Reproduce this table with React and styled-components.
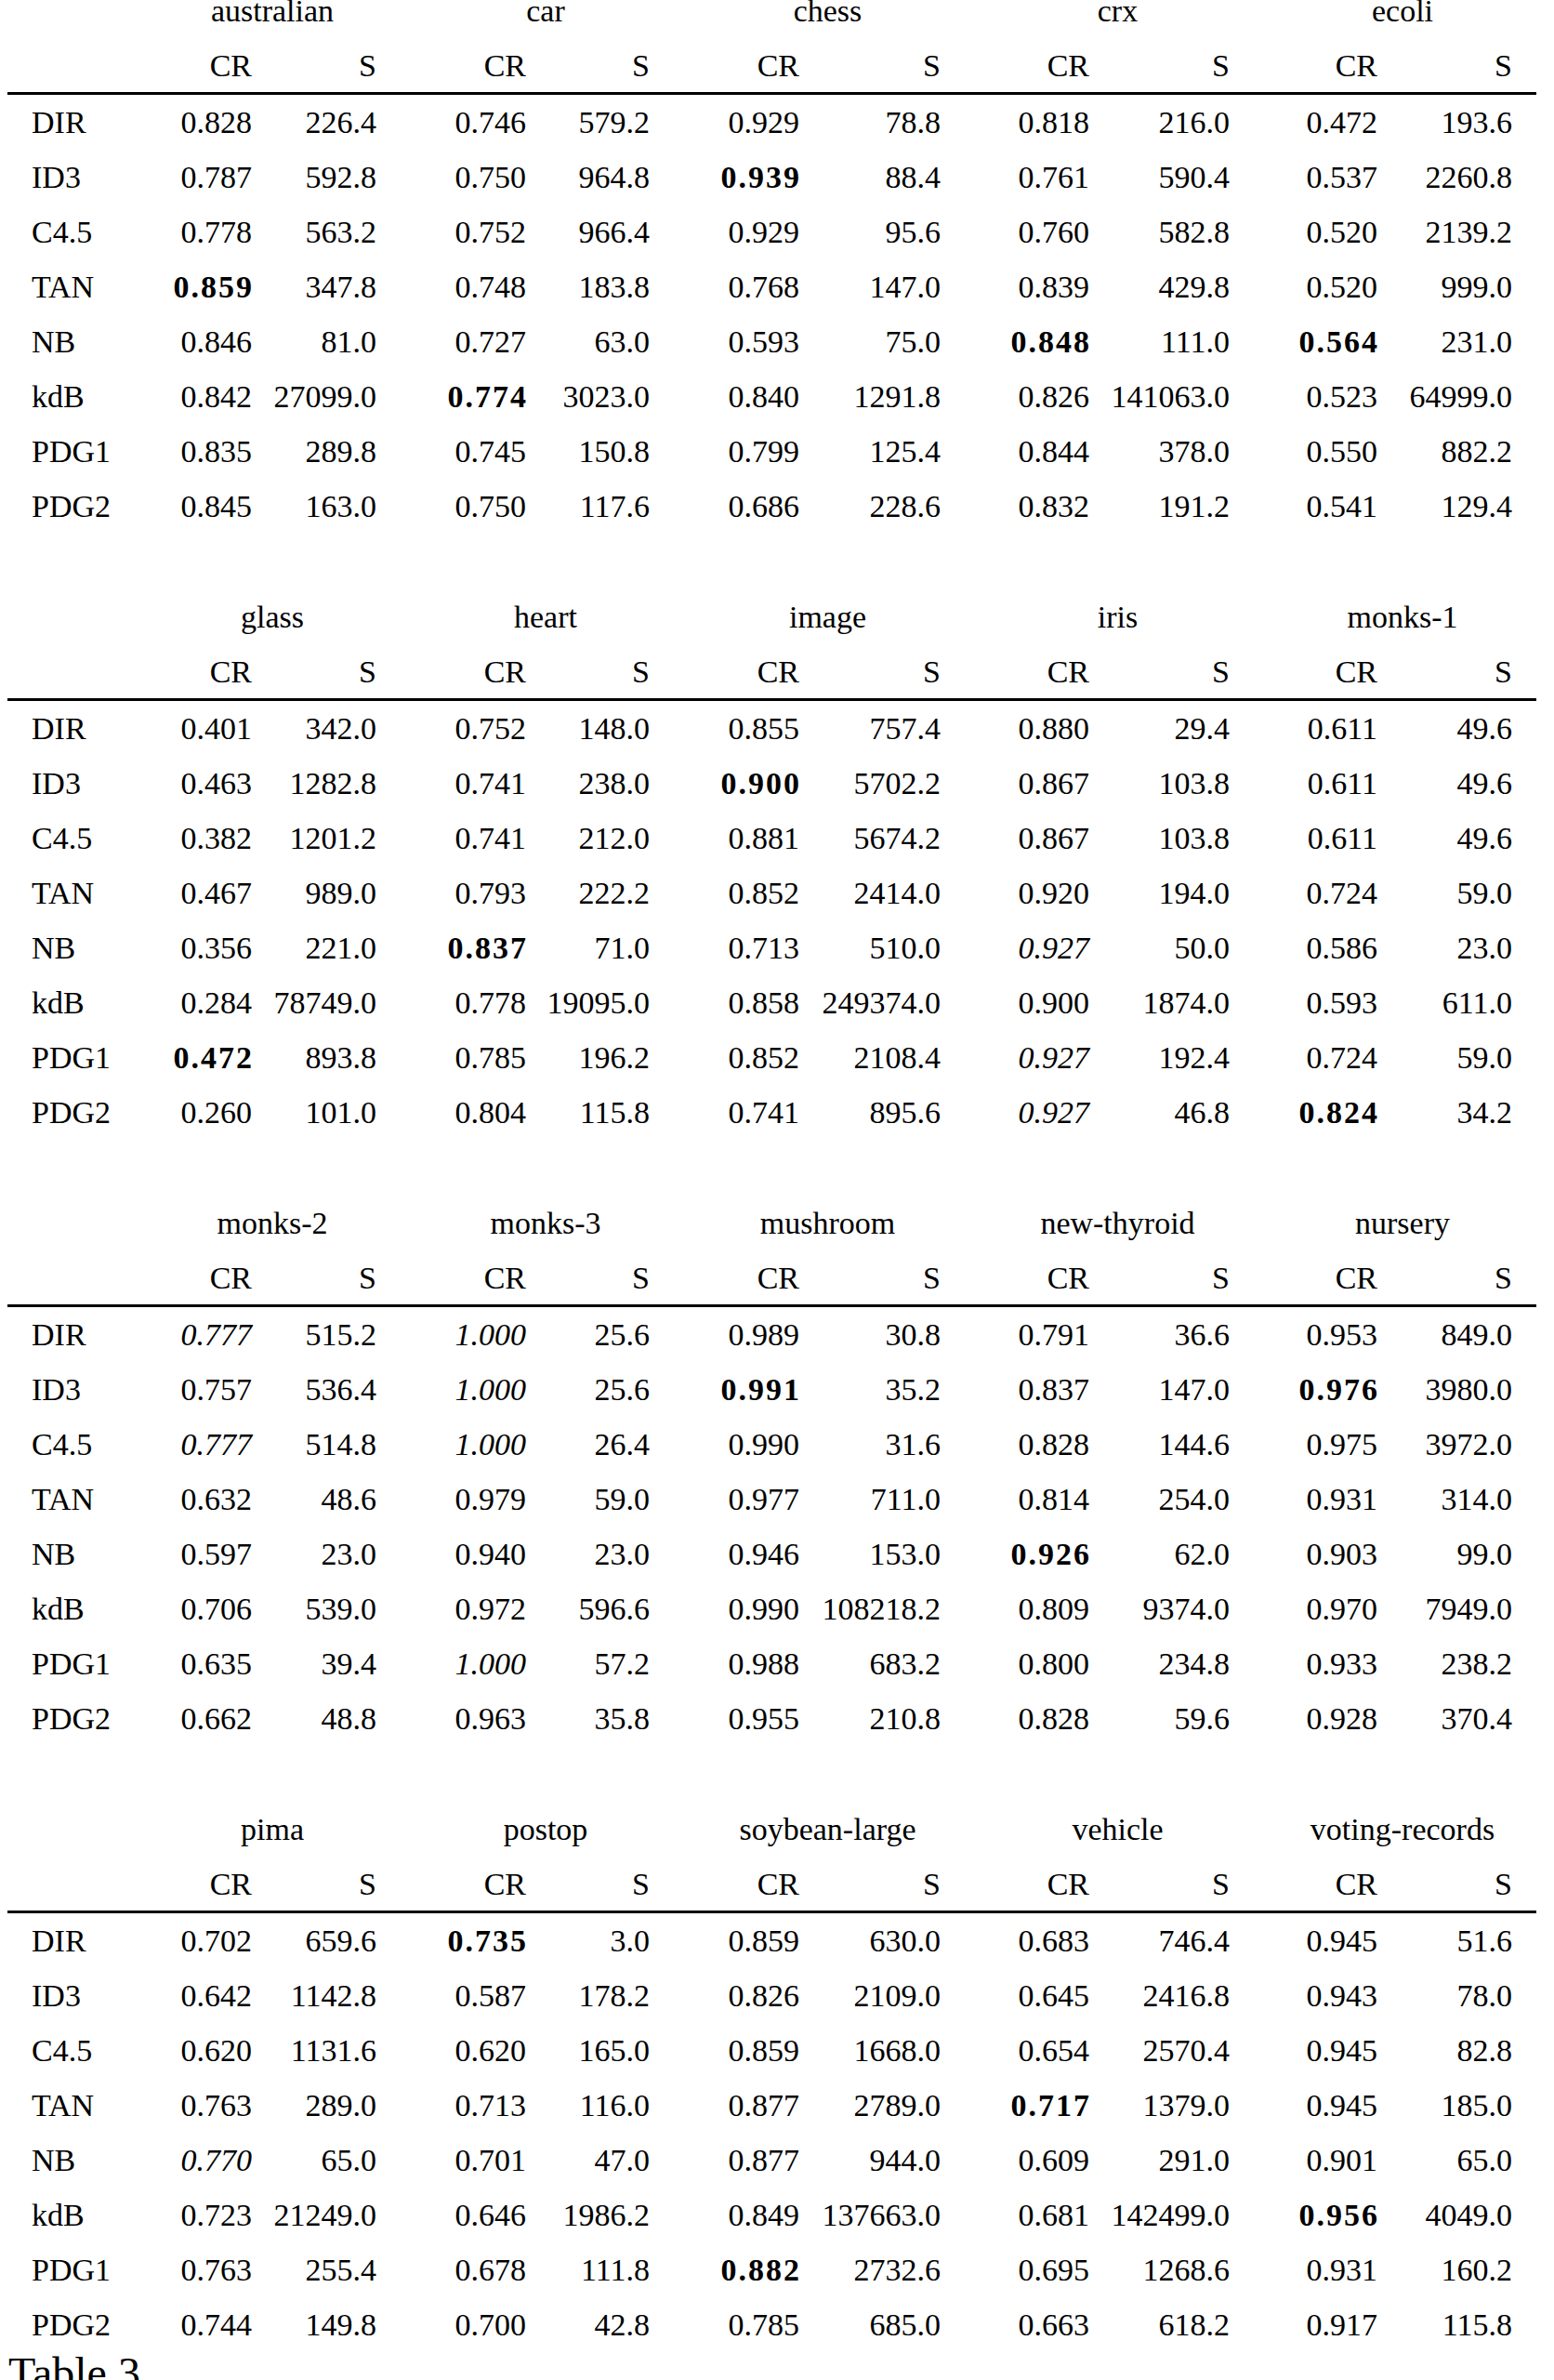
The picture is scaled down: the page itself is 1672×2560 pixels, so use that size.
import styled, { createGlobalStyle } from "styled-components";

const GlobalStyle = createGlobalStyle`
  html, body {
    margin: 0;
    padding: 0;
    background: #ffffff;
  }
  body {
    font-family: "Liberation Serif", "Times New Roman", serif;
    color: #000000;
  }
`;

// column tracks shared by every block (label, then CR/S pairs)
const COLS = "138px 160px 134px 161px 133px 161px 152px 160px 151px 159px 136px";

const Page = styled.div`
  width: 1672px;
  padding-top: 0;
`;

const Block = styled.div`
  display: grid;
  grid-template-columns: ${COLS};
  margin-left: 8px;
  font-size: 34px;

  & + & {
    margin-top: 78px;
  }
`;

const Corner = styled.div`
  line-height: 23px;
  height: 23px;
`;

const DatasetName = styled.div`
  grid-column: span 2;
  text-align: center;
  line-height: 23px;
  height: 23px;
  white-space: nowrap;
  padding-left: ${(p) => (p.$last ? "7px" : "0")};
`;

const HeadLabel = styled.div`
  margin-top: 19px;
  line-height: 57px;
`;

const HeadCell = styled.div`
  margin-top: 19px;
  line-height: 57px;
  display: flex;
  justify-content: flex-end;
  padding-right: ${(p) => (p.$last ? "26px" : "35px")};
`;

const Rule = styled.div`
  grid-column: 1 / -1;
  height: 3px;
  background: #000000;
`;

const RowLabel = styled.div`
  line-height: 59px;
  padding-left: 26px;
  white-space: nowrap;
`;

const Cell = styled.div`
  line-height: 59px;
  display: flex;
  justify-content: flex-end;
  white-space: nowrap;
  padding-right: ${(p) => (p.$last ? "26px" : "35px")};
`;

const Value = styled.span`
  font-weight: ${(p) => (p.$bold ? 700 : 400)};
  font-style: ${(p) => (p.$italic ? "italic" : "normal")};
  letter-spacing: ${(p) => (p.$bold ? "2px" : "0")};
  margin-right: ${(p) => (p.$bold ? "-2px" : "0")};
`;

const Caption = styled.div`
  font-size: 48px;
  line-height: 48px;
  padding-left: 9px;
  margin-top: -1px;
`;

const METHODS = ["DIR", "ID3", "C4.5", "TAN", "NB", "kdB", "PDG1", "PDG2"];

// "b:" = best value (bold), "i:" = italic
const blocks = [
  {
    names: ["australian", "car", "chess", "crx", "ecoli"],
    rows: [
      ["0.828", "226.4", "0.746", "579.2", "0.929", "78.8", "0.818", "216.0", "0.472", "193.6"],
      ["0.787", "592.8", "0.750", "964.8", "b:0.939", "88.4", "0.761", "590.4", "0.537", "2260.8"],
      ["0.778", "563.2", "0.752", "966.4", "0.929", "95.6", "0.760", "582.8", "0.520", "2139.2"],
      ["b:0.859", "347.8", "0.748", "183.8", "0.768", "147.0", "0.839", "429.8", "0.520", "999.0"],
      ["0.846", "81.0", "0.727", "63.0", "0.593", "75.0", "b:0.848", "111.0", "b:0.564", "231.0"],
      ["0.842", "27099.0", "b:0.774", "3023.0", "0.840", "1291.8", "0.826", "141063.0", "0.523", "64999.0"],
      ["0.835", "289.8", "0.745", "150.8", "0.799", "125.4", "0.844", "378.0", "0.550", "882.2"],
      ["0.845", "163.0", "0.750", "117.6", "0.686", "228.6", "0.832", "191.2", "0.541", "129.4"],
    ],
  },
  {
    names: ["glass", "heart", "image", "iris", "monks-1"],
    rows: [
      ["0.401", "342.0", "0.752", "148.0", "0.855", "757.4", "0.880", "29.4", "0.611", "49.6"],
      ["0.463", "1282.8", "0.741", "238.0", "b:0.900", "5702.2", "0.867", "103.8", "0.611", "49.6"],
      ["0.382", "1201.2", "0.741", "212.0", "0.881", "5674.2", "0.867", "103.8", "0.611", "49.6"],
      ["0.467", "989.0", "0.793", "222.2", "0.852", "2414.0", "0.920", "194.0", "0.724", "59.0"],
      ["0.356", "221.0", "b:0.837", "71.0", "0.713", "510.0", "i:0.927", "50.0", "0.586", "23.0"],
      ["0.284", "78749.0", "0.778", "19095.0", "0.858", "249374.0", "0.900", "1874.0", "0.593", "611.0"],
      ["b:0.472", "893.8", "0.785", "196.2", "0.852", "2108.4", "i:0.927", "192.4", "0.724", "59.0"],
      ["0.260", "101.0", "0.804", "115.8", "0.741", "895.6", "i:0.927", "46.8", "b:0.824", "34.2"],
    ],
  },
  {
    names: ["monks-2", "monks-3", "mushroom", "new-thyroid", "nursery"],
    rows: [
      ["i:0.777", "515.2", "i:1.000", "25.6", "0.989", "30.8", "0.791", "36.6", "0.953", "849.0"],
      ["0.757", "536.4", "i:1.000", "25.6", "b:0.991", "35.2", "0.837", "147.0", "b:0.976", "3980.0"],
      ["i:0.777", "514.8", "i:1.000", "26.4", "0.990", "31.6", "0.828", "144.6", "0.975", "3972.0"],
      ["0.632", "48.6", "0.979", "59.0", "0.977", "711.0", "0.814", "254.0", "0.931", "314.0"],
      ["0.597", "23.0", "0.940", "23.0", "0.946", "153.0", "b:0.926", "62.0", "0.903", "99.0"],
      ["0.706", "539.0", "0.972", "596.6", "0.990", "108218.2", "0.809", "9374.0", "0.970", "7949.0"],
      ["0.635", "39.4", "i:1.000", "57.2", "0.988", "683.2", "0.800", "234.8", "0.933", "238.2"],
      ["0.662", "48.8", "0.963", "35.8", "0.955", "210.8", "0.828", "59.6", "0.928", "370.4"],
    ],
  },
  {
    names: ["pima", "postop", "soybean-large", "vehicle", "voting-records"],
    rows: [
      ["0.702", "659.6", "b:0.735", "3.0", "0.859", "630.0", "0.683", "746.4", "0.945", "51.6"],
      ["0.642", "1142.8", "0.587", "178.2", "0.826", "2109.0", "0.645", "2416.8", "0.943", "78.0"],
      ["0.620", "1131.6", "0.620", "165.0", "0.859", "1668.0", "0.654", "2570.4", "0.945", "82.8"],
      ["0.763", "289.0", "0.713", "116.0", "0.877", "2789.0", "b:0.717", "1379.0", "0.945", "185.0"],
      ["i:0.770", "65.0", "0.701", "47.0", "0.877", "944.0", "0.609", "291.0", "0.901", "65.0"],
      ["0.723", "21249.0", "0.646", "1986.2", "0.849", "137663.0", "0.681", "142499.0", "b:0.956", "4049.0"],
      ["0.763", "255.4", "0.678", "111.8", "b:0.882", "2732.6", "0.695", "1268.6", "0.931", "160.2"],
      ["0.744", "149.8", "0.700", "42.8", "0.785", "685.0", "0.663", "618.2", "0.917", "115.8"],
    ],
  },
];

const renderValue = (raw) => {
  const bold = raw.startsWith("b:");
  const italic = raw.startsWith("i:");
  const text = bold || italic ? raw.slice(2) : raw;
  return (
    <Value $bold={bold} $italic={italic}>
      {text}
    </Value>
  );
};

const ResultBlock = ({ names, rows }) => (
  <Block>
    <Corner />
    {names.map((name, i) => (
      <DatasetName key={name} $last={i === names.length - 1}>
        {name}
      </DatasetName>
    ))}

    <HeadLabel />
    {names.map((name, i) => [
      <HeadCell key={name + "-cr"}>CR</HeadCell>,
      <HeadCell key={name + "-s"} $last={i === names.length - 1}>
        S
      </HeadCell>,
    ])}

    <Rule />

    {rows.map((row, r) => [
      <RowLabel key={"l" + r}>{METHODS[r]}</RowLabel>,
      ...row.map((v, c) => (
        <Cell key={r + "-" + c} $last={c === row.length - 1}>
          {renderValue(v)}
        </Cell>
      )),
    ])}
  </Block>
);

const App = () => {
  return (
    <>
      <GlobalStyle />
      <Page>
        {blocks.map((b) => (
          <ResultBlock key={b.names[0]} names={b.names} rows={b.rows} />
        ))}
        <Caption>Table 3</Caption>
      </Page>
    </>
  );
};

export default App;
